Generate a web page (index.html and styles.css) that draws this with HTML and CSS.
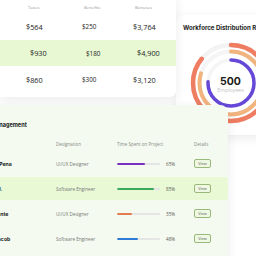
FILE: index.html
```html
<!DOCTYPE html>
<html>
<head>
<meta charset="utf-8">
<link rel="stylesheet" href="styles.css">
</head>
<body>
<div class="stage">
  <div class="top">
    <div class="pay card">
      <div class="pay-row pay-head"><span>Taxes</span><span>Benefits</span><span>Bonuses</span></div>
      <div class="pay-row"><span>$564</span><span class="sm">$250</span><span>$3,764</span></div>
      <div class="pay-row hl"><span>$930</span><span class="sm">$180</span><span>$4,900</span></div>
      <div class="pay-row"><span>$860</span><span class="sm">$300</span><span>$3,120</span></div>
    </div>
    <div class="dist card">
      <div class="dist-title">Workforce Distribution Report</div>
      <svg class="donut" width="94" height="94" viewBox="0 0 94 94">
        <g transform="rotate(-90 47 47)" fill="none">
          <circle cx="47" cy="47" r="38" stroke="#f3f3f3" stroke-width="4.5"/>
          <circle cx="47" cy="47" r="31.5" stroke="#f5f5f5" stroke-width="4"/>
          <circle cx="47" cy="47" r="23" stroke="#f5f5f5" stroke-width="3.5"/>
          <circle cx="47" cy="47" r="38" stroke="#ee7d62" stroke-width="4.5" pathLength="100" stroke-dasharray="86 100" stroke-linecap="round"/>
          <circle cx="47" cy="47" r="31.5" stroke="#f1b47f" stroke-width="4" pathLength="100" stroke-dasharray="80 100" stroke-linecap="round"/>
          <circle cx="47" cy="47" r="23" stroke="#6548d8" stroke-width="3.5" pathLength="100" stroke-dasharray="76 100" stroke-linecap="round"/>
        </g>
        <text class="big" x="46.5" y="48.5" text-anchor="middle">500</text>
        <text class="small" x="46.5" y="56" text-anchor="middle">Employees</text>
      </svg>
    </div>
  </div>
  <div class="mgmt card">
    <div class="mgmt-title">Project Management</div>
    <div class="m-row m-head">
      <span>Name</span><span>Designation</span><span>Time Spent on Project</span><span></span><span>Details</span>
    </div>
    <div class="m-row">
      <span class="name">Marguerite Pena</span><span class="role">UI/UX Designer</span>
      <span class="bar"><i class="fill purple" style="width:65%"></i></span><span class="pct">65%</span>
      <span><button class="view">View</button></span>
    </div>
    <div class="m-row hl">
      <span class="name">Savannah J.</span><span class="role">Software Engineer</span>
      <span class="bar"><i class="fill green" style="width:85%"></i></span><span class="pct">85%</span>
      <span><button class="view">View</button></span>
    </div>
    <div class="m-row">
      <span class="name">Kristina Fuente</span><span class="role">UI/UX Designer</span>
      <span class="bar"><i class="fill orange" style="width:35%"></i></span><span class="pct">35%</span>
      <span><button class="view">View</button></span>
    </div>
    <div class="m-row">
      <span class="name">Jeremiah Jacob</span><span class="role">Software Engineer</span>
      <span class="bar"><i class="fill blue" style="width:48%"></i></span><span class="pct">48%</span>
      <span><button class="view">View</button></span>
    </div>
  </div>
</div>
</body>
</html>
```
FILE: styles.css
```css
* { box-sizing: border-box; }
html, body { margin: 0; padding: 0; background: #ffffff; }
body { font-family: "Open Sans", "Noto Sans", sans-serif; color: #222; }
.stage { width: 256px; height: 256px; overflow: hidden; }
.top { display: flex; align-items: flex-start; }
.card { background: #fff; box-shadow: 0 3px 12px rgba(0,0,0,0.08); }

.pay { width: 176px; flex: none; height: 105px; margin-top: -8px; padding-top: 8px; border-radius: 0 6px 6px 0; position: relative; z-index: 2; }
.pay-row { display: grid; grid-template-columns: 56px 51px 1fr; align-items: center; padding-left: 26px; height: 27px; font-size: 7.3px; color: #222; }
.pay-row:nth-child(3) { height: 26px; }
.pay-head { height: 13px; font-size: 4.3px; color: #999; }
.pay-head span { padding-left: 2px; }
.pay-row .sm { font-size: 6.3px; }
.pay-row.hl { background: #e7f8d3; padding-left: 30px; }

.dist { flex: none; width: 100px; height: 120px; margin-top: 15px; border-radius: 8px; padding: 9px 0 0 7px; }
.dist-title { font-family: "Inter", "Open Sans", sans-serif; font-weight: 700; font-size: 6.1px; line-height: 8px; white-space: nowrap; color: #1a1a1a; }
.donut { display: block; margin: 4px 0 0 1px; }
.donut .big { font-family: "Inter", "Open Sans", sans-serif; font-weight: 700; font-size: 10.5px; fill: #1a1a1a; }
.donut .small { font-family: "Open Sans", sans-serif; font-size: 5.3px; fill: #c4c4c4; }

.mgmt { position: relative; z-index: 3; margin-top: -30px; margin-left: -40px; width: 268px; height: 170px; background: #f4faef; border-radius: 8px; padding: 16px 0 0 10px; }
.mgmt-title { font-family: "Inter", "Open Sans", sans-serif; font-weight: 700; font-size: 5.6px; line-height: 8px; margin-bottom: 8px; color: #1a1a1a; }
.m-row { display: grid; grid-template-columns: 86px 61px 49px 28px 1fr; align-items: center; height: 25px; font-size: 4.6px; }
.m-head { height: 14px; color: #888; font-size: 4.5px; }
.m-row.hl { background: #e9f9d6; margin: 1px 0 1px -10px; padding-left: 10px; height: 23px; border-radius: 3px; }
.m-row.hl .name { padding-left: 1.5px; }
.name { font-family: "Inter", "Open Sans", sans-serif; font-weight: 700; font-size: 5.2px; color: #222; white-space: nowrap; }
.role { color: #777; }
.pct { color: #555; }
.bar { display: block; width: 43px; height: 2px; background: #e5e5e5; border-radius: 1px; overflow: hidden; }
.fill { display: block; height: 100%; border-radius: 1px; }
.purple { background: #7a2fc0; }
.green { background: #3ba85c; }
.orange { background: #e47c4e; }
.blue { background: #2e7bd8; }
.view { display: block; width: 17px; height: 9px; padding: 0; border: 0.8px solid #98b97a; background: #eef8e3; border-radius: 2px; font-family: "Open Sans", sans-serif; font-size: 3.8px; color: #555; line-height: 7px; }
```
